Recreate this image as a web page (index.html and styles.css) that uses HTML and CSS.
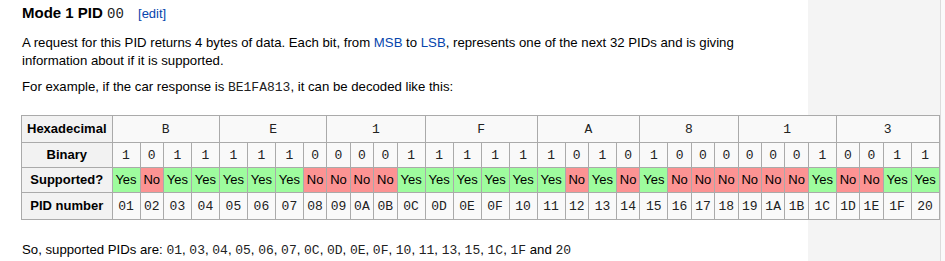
FILE: index.html
```html
<!DOCTYPE html>
<html>
<head>
    <meta charset="UTF-8">
    <title>OBD-II PIDs - Mode 1 PID 00</title>
    <link rel="stylesheet" href="styles.css">
</head>
<body>
    <div class="content">
        <h3>Mode 1 PID <code>00</code> <span class="edit">[<a href="#">edit</a>]</span></h3>
        <p class="intro">A request for this PID returns 4 bytes of data. Each bit, from <a href="#">MSB</a> to <a href="#">LSB</a>, represents one of the next 32 PIDs and is giving information about if it is supported.</p>
        <p>For example, if the car response is <code>BE1FA813</code>, it can be decoded like this:</p>

        <table class="wikitable">
            <tr class="first">
                <th>Hexadecimal</th>
                <td colspan="4"><code>B</code></td>
                <td colspan="4"><code>E</code></td>
                <td colspan="4"><code>1</code></td>
                <td colspan="4"><code>F</code></td>
                <td colspan="4"><code>A</code></td>
                <td colspan="4"><code>8</code></td>
                <td colspan="4"><code>1</code></td>
                <td colspan="4"><code>3</code></td>
            </tr>
            <tr>
                <th>Binary</th>
                <td><code>1</code></td><td><code>0</code></td><td><code>1</code></td><td><code>1</code></td>
                <td><code>1</code></td><td><code>1</code></td><td><code>1</code></td><td><code>0</code></td>
                <td><code>0</code></td><td><code>0</code></td><td><code>0</code></td><td><code>1</code></td>
                <td><code>1</code></td><td><code>1</code></td><td><code>1</code></td><td><code>1</code></td>
                <td><code>1</code></td><td><code>0</code></td><td><code>1</code></td><td><code>0</code></td>
                <td><code>1</code></td><td><code>0</code></td><td><code>0</code></td><td><code>0</code></td>
                <td><code>0</code></td><td><code>0</code></td><td><code>0</code></td><td><code>1</code></td>
                <td><code>0</code></td><td><code>0</code></td><td><code>1</code></td><td><code>1</code></td>
            </tr>
            <tr>
                <th>Supported?</th>
                <td class="yes">Yes</td><td class="no">No</td><td class="yes">Yes</td><td class="yes">Yes</td>
                <td class="yes">Yes</td><td class="yes">Yes</td><td class="yes">Yes</td><td class="no">No</td>
                <td class="no">No</td><td class="no">No</td><td class="no">No</td><td class="yes">Yes</td>
                <td class="yes">Yes</td><td class="yes">Yes</td><td class="yes">Yes</td><td class="yes">Yes</td>
                <td class="yes">Yes</td><td class="no">No</td><td class="yes">Yes</td><td class="no">No</td>
                <td class="yes">Yes</td><td class="no">No</td><td class="no">No</td><td class="no">No</td>
                <td class="no">No</td><td class="no">No</td><td class="no">No</td><td class="yes">Yes</td>
                <td class="no">No</td><td class="no">No</td><td class="yes">Yes</td><td class="yes">Yes</td>
            </tr>
            <tr class="last">
                <th>PID number</th>
                <td><code>01</code></td><td><code>02</code></td><td><code>03</code></td><td><code>04</code></td>
                <td><code>05</code></td><td><code>06</code></td><td><code>07</code></td><td><code>08</code></td>
                <td><code>09</code></td><td><code>0A</code></td><td><code>0B</code></td><td><code>0C</code></td>
                <td><code>0D</code></td><td><code>0E</code></td><td><code>0F</code></td><td><code>10</code></td>
                <td><code>11</code></td><td><code>12</code></td><td><code>13</code></td><td><code>14</code></td>
                <td><code>15</code></td><td><code>16</code></td><td><code>17</code></td><td><code>18</code></td>
                <td><code>19</code></td><td><code>1A</code></td><td><code>1B</code></td><td><code>1C</code></td>
                <td><code>1D</code></td><td><code>1E</code></td><td><code>1F</code></td><td><code>20</code></td>
            </tr>
        </table>

        <p class="summary">So, supported PIDs are: <code>01</code>, <code>03</code>, <code>04</code>, <code>05</code>, <code>06</code>, <code>07</code>, <code>0C</code>, <code>0D</code>, <code>0E</code>, <code>0F</code>, <code>10</code>, <code>11</code>, <code>13</code>, <code>15</code>, <code>1C</code>, <code>1F</code> and <code>20</code></p>
    </div>
</body>
</html>
```

FILE: styles.css
```css
html {
    /* page white, then the grey side column on the right */
    background: linear-gradient(to right, #fff 0, #fff 808px, #f4f4f4 808px, #f4f4f4 940px, #dcdcdc 940px, #dcdcdc 941px, #fafafa 941px);
    min-height: 100%;
}
body {
    margin: 0;
    color: #000;
    font-family: "Liberation Sans", Arial, sans-serif;
    font-size: 13.2px;
    line-height: 18px;
}
.content {
    padding: 4px 0 0 22px;
}
a {
    color: #0645ad;
    text-decoration: none;
}
code {
    font-family: "Liberation Mono", "Courier New", monospace;
    font-size: 13px;
    color: #222;
}
h3 {
    margin: 0 0 11px 0;
    font-size: 15px;
    line-height: 18px;
    font-weight: bold;
}
h3 code {
    font-weight: normal;
    font-size: 14px;
}
.edit {
    margin-left: 10px;
    font-weight: normal;
    font-size: 13px;
    color: #0645ad;
}
p {
    margin: 0 0 8px 0;
}
.intro {
    max-width: 720px;
}
.wikitable {
    margin: 18px 0 21px -1px;
    border-collapse: collapse;
    border: 1px solid #aaa;
    background-color: #f9f9f9;
    font-size: 13px;
}
.wikitable tr {
    height: 25px;
}
.wikitable tr.first,
.wikitable tr.last {
    height: 27px;
}
.wikitable th,
.wikitable td {
    border: 1px solid #aaa;
    padding: 0 2.9px;
    text-align: center;
    line-height: 18px;
}
.wikitable th {
    background-color: #f2f2f2;
    padding: 0 5px;
}
.wikitable td.yes {
    background-color: #9efc9e;
}
.wikitable td.no {
    background-color: #fc9393;
}
.summary {
    margin: 0;
}
```
